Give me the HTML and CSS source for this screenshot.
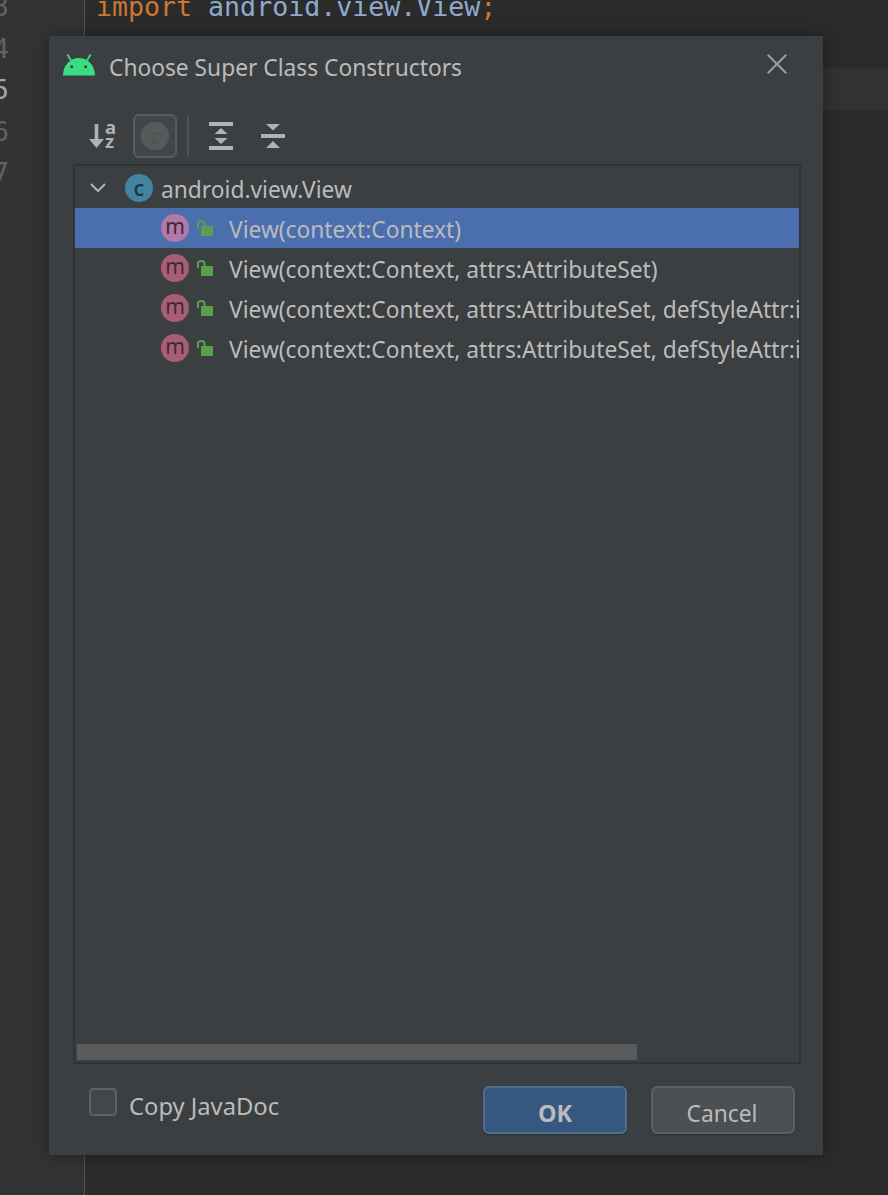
FILE: index.html
```html
<!DOCTYPE html>
<html lang="en">
<head>
<meta charset="utf-8">
<title>Choose Super Class Constructors</title>
<link rel="stylesheet" href="styles.css">
</head>
<body>
<div class="editor">
  <div class="gutter">
    <div class="num">3</div>
    <div class="num">4</div>
    <div class="num cur">5</div>
    <div class="num">6</div>
    <div class="num">7</div>
  </div>
  <div class="code">
    <div class="line"><span class="kw">import</span> <span class="pkg">android.view.View</span><span class="kw">;</span></div>
    <div class="line"></div>
    <div class="line curline"></div>
  </div>
</div>
<div class="dialog">
  <header class="titlebar">
    <svg class="android" width="32" height="22" viewBox="0 0 32 22"><path d="M4.500.5 8 6.500M27.500.5 24 6.500" stroke="#3ddc84" stroke-width="1.800" fill="none"/><path d="M0 21.500C0 11.500 7 4 16 4S32 11.500 32 21.500Z" fill="#3ddc84"/><circle cx="8.700" cy="12.700" r="1.500" fill="#2b4a3c"/><circle cx="22.700" cy="12.700" r="1.500" fill="#2b4a3c"/></svg>
    <h1 class="title">Choose Super Class Constructors</h1>
    <svg class="close" width="20" height="20" viewBox="0 0 20 20"><path d="M.7.700 19.300 19.300M19.300.7.700 19.300" stroke="#9a9c9e" stroke-width="2" fill="none"/></svg>
  </header>
  <div class="toolbar">
    <svg class="tool sort" width="28" height="28" viewBox="0 0 28 28"><path d="M7.500 2V18" stroke="#afb1b3" stroke-width="3.600"/><path d="M0 17H15L7.500 26Z" fill="#afb1b3"/><text class="az" x="16" y="12">a</text><text class="az" x="16" y="26">z</text></svg>
    <div class="tool-active"><span class="disabled-c">c</span></div>
    <div class="sep"></div>
    <svg class="tool expand" width="24" height="28" viewBox="0 0 24 28"><path d="M0 0H24V4H0ZM0 24H24V28H0ZM12 6 18.500 12H5.500ZM12 22 5.500 16H18.500Z" fill="#afb1b3"/></svg>
    <svg class="tool collapse" width="24" height="24" viewBox="0 0 24 24"><path d="M0 10H24V14H0ZM5 0H19L12 6.500ZM12 17 19 24H5Z" fill="#afb1b3"/></svg>
  </div>
  <div class="tree">
    <div class="rows">
      <div class="row root">
        <svg class="chev" width="16" height="10" viewBox="0 0 16 10"><path d="M1 1 8 8 15 1" stroke="#afb1b3" stroke-width="2" fill="none"/></svg>
        <span class="badge badge-c">c</span>
        <span class="label">android.view.View</span>
      </div>
      <div class="row child selected">
        <span class="badge badge-m badge-m-sel">m</span>
        <svg class="lock" width="16" height="16" viewBox="0 0 16 16"><path d="M4 6H16V16H4Z" fill="#5aa04e"/><path d="M1 8V3.500C1 .3 7.500 .3 7.500 3.500V6" stroke="#5aa04e" stroke-width="2" fill="none"/></svg>
        <span class="label">View(context:Context)</span>
      </div>
      <div class="row child">
        <span class="badge badge-m">m</span>
        <svg class="lock" width="16" height="16" viewBox="0 0 16 16"><path d="M4 6H16V16H4Z" fill="#5aa04e"/><path d="M1 8V3.500C1 .3 7.500 .3 7.500 3.500V6" stroke="#5aa04e" stroke-width="2" fill="none"/></svg>
        <span class="label">View(context:Context, attrs:AttributeSet)</span>
      </div>
      <div class="row child">
        <span class="badge badge-m">m</span>
        <svg class="lock" width="16" height="16" viewBox="0 0 16 16"><path d="M4 6H16V16H4Z" fill="#5aa04e"/><path d="M1 8V3.500C1 .3 7.500 .3 7.500 3.500V6" stroke="#5aa04e" stroke-width="2" fill="none"/></svg>
        <span class="label">View(context:Context, attrs:AttributeSet, defStyleAttr:int)</span>
      </div>
      <div class="row child">
        <span class="badge badge-m">m</span>
        <svg class="lock" width="16" height="16" viewBox="0 0 16 16"><path d="M4 6H16V16H4Z" fill="#5aa04e"/><path d="M1 8V3.500C1 .3 7.500 .3 7.500 3.500V6" stroke="#5aa04e" stroke-width="2" fill="none"/></svg>
        <span class="label">View(context:Context, attrs:AttributeSet, defStyleAttr:int, defStyleRes:int)</span>
      </div>
    </div>
    <div class="hscroll"><div class="thumb"></div></div>
  </div>
  <footer class="footer">
    <label class="check"><span class="box"></span><span class="check-label">Copy JavaDoc</span></label>
    <div class="buttons">
      <button class="btn primary">OK</button>
      <button class="btn secondary">Cancel</button>
    </div>
  </footer>
</div>
</body>
</html>
```
FILE: styles.css
```css
* { box-sizing: border-box; }
html, body { margin: 0; height: 100%; }
body {
  height: 1195px;
  overflow: hidden;
  background: #2b2b2b;
  font-family: "Noto Sans", "Open Sans", sans-serif;
  color: #bbbbbb;
}
.editor { display: flex; height: 100%; }
.gutter {
  width: 85px;
  flex: none;
  background: #313335;
  border-right: 1px solid #555555;
  overflow: hidden;
  padding-top: 0;
}
.num {
  height: 41.500px;
  font: 26.500px/41.500px "DejaVu Sans Mono", monospace;
  color: #606366;
  margin-left: -7px;
  transform: translateY(-14px);
}
.num.cur { color: #a4a3a3; }
.code { flex: 1; margin-top: -15px; font: 26.600px/41.500px "DejaVu Sans Mono", monospace; }
.line { height: 41.500px; white-space: pre; padding: 1px 0 0 11px; }
.curline { background: #323232; }
.kw { color: #cc7832; }
.pkg { color: #8eaace; }

.dialog {
  position: absolute;
  left: 49px;
  top: 36px;
  width: 774px;
  height: 1119px;
  background: #3c3f41;
  box-shadow: 0 0 18px rgba(0,0,0,.35);
  display: flex;
  flex-direction: column;
}
.titlebar { display: flex; align-items: center; height: 62px; padding: 0 36px 0 14px; flex: none; }
.android { flex: none; margin-top: -5px; }
.title { margin: 0 0 0 14px; flex: 1; font-size: 22.750px; font-weight: 400; color: #bbbbbb; }
.close { flex: none; margin-top: -6px; }

.toolbar { display: flex; align-items: center; height: 44px; margin-top: 16px; padding-left: 40px; flex: none; }
.sort { margin-right: 16px; }
.tool-active {
  width: 44px; height: 44px;
  border: 2px solid #5a5b5c;
  border-radius: 6px;
  background: #434648;
  display: flex; align-items: center; justify-content: center;
  flex: none;
}
.disabled-c {
  width: 28px; height: 28px; border-radius: 50%;
  background: #575a5b; color: #505354;
  display: flex; align-items: center; justify-content: center;
  font-size: 22px; line-height: 1; padding-bottom: 3px;
}
.sep { width: 2px; height: 40px; background: #515354; margin: 0 20px 0 10px; flex: none; }
.expand { margin-right: 28px; }
.az { font: 700 18.500px "Noto Sans", sans-serif; fill: #afb1b3; }

.tree {
  margin: 6px 22px 0 24px;
  height: 900px;
  border: 2px solid #323232;
  display: flex;
  flex-direction: column;
  flex: none;
  overflow: hidden;
}
.rows { flex: 1; min-height: 0; padding-top: 2px; overflow: hidden; }
.row { display: flex; align-items: center; height: 40px; white-space: nowrap; font-size: 22.750px; color: #bbbbbb; }
.root { padding-left: 15px; }
.child { padding-left: 86px; }
.selected { background: #4b6eaf; }
.chev { flex: none; margin-right: 19px; }
.badge {
  width: 28px; height: 28px; border-radius: 50%;
  display: flex; align-items: center; justify-content: center;
  flex: none; font-size: 21px; line-height: 1; padding-bottom: 3px;
  color: #3b2a33;
}
.badge-c { background: #40849f; color: #1f333f; margin-right: 8px; font-size: 22px; font-weight: 500; }
.badge-m { background: #a85f74; margin-right: 8px; }
.badge-m-sel { background: #b179a8; }
.lock { flex: none; margin-right: 16px; }
.label { flex: none; padding-top: 3px; }
.hscroll { height: 20px; padding: 2px; flex: none; }
.thumb { width: 560px; height: 16px; background: #5a5b5c; }

.footer { display: flex; justify-content: space-between; padding: 22px 28px 0 40px; flex: 1; }
.check { display: flex; align-items: flex-start; font-size: 23.750px; color: #bbbbbb; }
.box { width: 28px; height: 28px; border: 2px solid #5f6163; border-radius: 4px; background: #43474a; margin: 2px 12px 0 0; }
.check-label { line-height: 40px; }
.buttons { display: flex; gap: 24px; }
.btn {
  width: 144px; height: 48px;
  border: 2px solid #5e6060;
  border-radius: 6px;
  background: #4c5052;
  color: #bbbbbb;
  font: 22.750px "Noto Sans", sans-serif;
  padding: 6px 0 0;
  box-shadow: 0 1px 2px rgba(0,0,0,.25);
}
.secondary { padding-right: 2px; }
.primary { background: #365880; border-color: #4c708c; font-weight: 700; font-size: 23.500px; }
```
